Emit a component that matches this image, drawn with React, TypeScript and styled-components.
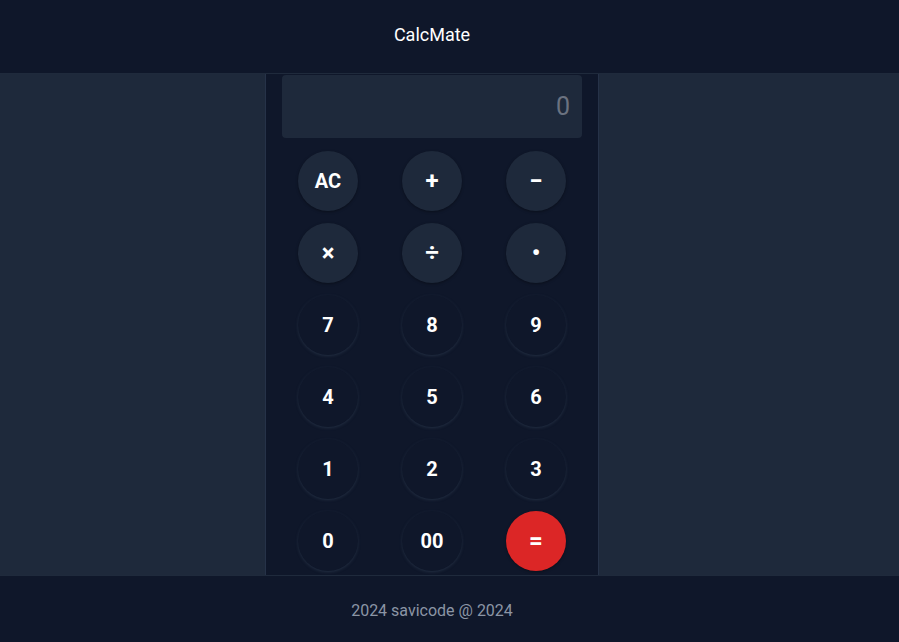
import React from "react";
import styled, { createGlobalStyle } from "styled-components";

const Global = createGlobalStyle`
  html, body { margin: 0; padding: 0; background: #0f172a; }
  * { box-sizing: border-box; }
  body { font-family: Roboto, "Liberation Sans", Arial, sans-serif; }
`;

const Page = styled.div`
  min-height: 100vh;
  display: flex;
  flex-direction: column;
  background: #0f172a;
`;

const Header = styled.header`
  height: 74px;
  flex-shrink: 0;
  display: flex;
  align-items: center;
  justify-content: center;
  border-bottom: 1px solid #1f2a3c;
  color: #ffffff;
  font-size: 18px;
  font-weight: 400;
  padding: 0 35px 4px 0;
`;

const Main = styled.main`
  flex: 1;
  display: flex;
  justify-content: center;
  background: #1e293b;
  padding-right: 35px;
`;

const Column = styled.section`
  width: 334px;
  background: #0f172a;
  border-left: 1px solid #263248;
  border-right: 1px solid #263248;
  padding: 1px 16px 4px;
  display: flex;
  flex-direction: column;
`;

const Display = styled.div`
  height: 63px;
  background: #1e293b;
  border-radius: 4px;
  display: flex;
  align-items: center;
  justify-content: flex-end;
  padding: 0 12px;
  color: #6b7280;
  font-size: 25px;
`;

const Keys = styled.div`
  margin-top: 13px;
  padding: 0 16px;
  display: grid;
  grid-template-columns: repeat(3, 60px);
  justify-content: space-between;
  row-gap: 12px;
`;

type Variant = "op" | "num" | "eq";

const Key = styled.button<{ $variant: Variant; $symbol?: boolean }>`
  width: 60px;
  height: 60px;
  border-radius: 50%;
  border: none;
  padding: 0;
  display: flex;
  align-items: center;
  justify-content: center;
  font-family: Roboto, "Liberation Sans", Arial, sans-serif;
  font-weight: 700;
  font-size: ${(p) => (p.$symbol ? "24px" : "20px")};
  color: #ffffff;
  cursor: pointer;
  background: ${(p) =>
    p.$variant === "op" ? "#1e293b" : p.$variant === "eq" ? "#dc2626" : "#0f172a"};
  box-shadow: ${(p) =>
    p.$variant === "num"
      ? "0 1px 3px rgba(51, 65, 85, 0.55)"
      : "0 1px 3px rgba(0, 0, 0, 0.35)"};
`;

const Footer = styled.footer`
  height: 67px;
  flex-shrink: 0;
  border-top: 1px solid #1f2a3c;
  display: flex;
  align-items: center;
  justify-content: center;
  color: #8b95a5;
  font-size: 16px;
  padding: 2px 35px 0 0;
`;

const keys: { label: string; variant: Variant; symbol?: boolean }[] = [
  { label: "AC", variant: "op" },
  { label: "+", variant: "op", symbol: true },
  { label: "−", variant: "op", symbol: true },
  { label: "×", variant: "op", symbol: true },
  { label: "÷", variant: "op", symbol: true },
  { label: "•", variant: "op", symbol: true },
  { label: "7", variant: "num" },
  { label: "8", variant: "num" },
  { label: "9", variant: "num" },
  { label: "4", variant: "num" },
  { label: "5", variant: "num" },
  { label: "6", variant: "num" },
  { label: "1", variant: "num" },
  { label: "2", variant: "num" },
  { label: "3", variant: "num" },
  { label: "0", variant: "num" },
  { label: "00", variant: "num" },
  { label: "=", variant: "eq", symbol: true },
];

export default function App() {
  return (
    <>
      <Global />
      <Page>
        <Header>CalcMate</Header>
        <Main>
          <Column>
            <Display>0</Display>
            <Keys>
              {keys.map((k) => (
                <Key key={k.label} $variant={k.variant} $symbol={k.symbol}>
                  {k.label}
                </Key>
              ))}
            </Keys>
          </Column>
        </Main>
        <Footer>2024 savicode @ 2024</Footer>
      </Page>
    </>
  );
}
